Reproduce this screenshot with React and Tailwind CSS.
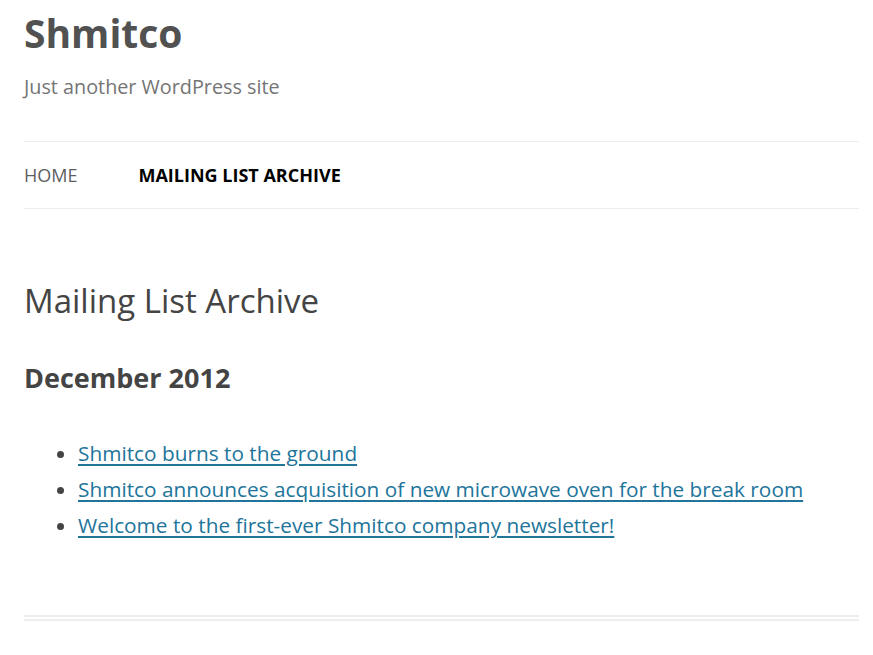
const posts = [
    'Shmitco burns to the ground',
    'Shmitco announces acquisition of new microwave oven for the break room',
    'Welcome to the first-ever Shmitco company newsletter!',
];

const App = () => {
    return (
        <div className="min-h-screen bg-white pl-6 pr-[14px] font-['Open_Sans',sans-serif] text-[#444]">
            <header>
                <h1 className="pt-[9px] text-[39px] font-bold leading-[48px] text-[#515151]">Shmitco</h1>
                <p className="mt-[15px] text-[19.8px] leading-[30px] text-[#757575]">Just another WordPress site</p>

                <nav className="mt-[39px] flex h-[68px] items-center gap-[61px] border-y border-[#ededed] text-[18px] uppercase">
                    <a href="#" className="text-[#5e5e5e]">Home</a>
                    <a href="#" className="font-bold text-black">Mailing List Archive</a>
                </nav>
            </header>

            <main className="pt-[72px]">
                <article className="border-b-[6px] border-double border-[#ededed] pb-[72px]">
                    <h1 className="text-[33px] font-normal leading-[40px] text-[#444]">Mailing List Archive</h1>

                    <h2 className="mt-[37px] text-[27px] font-bold leading-[40px] text-[#444]">December 2012</h2>

                    <ul className="mt-[37px] list-disc pl-[54px] text-[20.8px] leading-[36px]">
                        {posts.map((title) => (
                            <li key={title}>
                                <a href="#" className="text-[#21759b] underline underline-offset-[3px]">{title}</a>
                            </li>
                        ))}
                    </ul>
                </article>
            </main>
        </div>
    );
};

export default App;
